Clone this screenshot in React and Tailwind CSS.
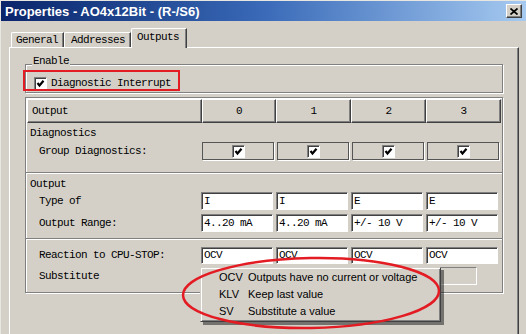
import React from "react";

const mono = "font-['Liberation_Mono',monospace] text-[11px] tracking-[-0.6px] text-black";
const sans = "font-['Liberation_Sans',Arial,sans-serif]";

// sunken white checkbox with a tick
function Check() {
  return (
    <span className="block w-[13px] h-[13px] bg-white border border-t-[#808080] border-l-[#808080] border-b-white border-r-white shadow-[inset_1px_1px_0_#404040]">
      <svg width="11" height="11" viewBox="0 0 11 11" className="block">
        <polyline points="2.5,5 4.5,7.5 8.5,2.8" fill="none" stroke="#000" strokeWidth="2.2" />
      </svg>
    </span>
  );
}

function Field({ value }) {
  return (
    <div className={`w-[72px] h-full bg-white border border-t-[#808080] border-l-[#808080] border-b-white border-r-white shadow-[inset_1px_1px_0_#404040] pl-[2px] flex items-center leading-none ${mono}`}>
      {value}
    </div>
  );
}

function Row({ label, indent = true, className = "", children }) {
  return (
    <div className={`flex ${className}`}>
      <div className={`w-[175px] flex items-center ${indent ? "pl-[13px]" : "pl-[4px]"} ${mono}`}>{label}</div>
      {children}
    </div>
  );
}

function Separator({ className = "" }) {
  return <div className={`h-[2px] border-t border-[#808080] bg-white ${className}`} />;
}

const columns = ["0", "1", "2", "3"];

export default function App() {
  return (
    <div className="w-[526px] h-[334px] overflow-hidden relative bg-[#d4d0c8] border-t border-l border-t-[#e8e6e0] border-l-[#e8e6e0]">
      {/* title bar */}
      <div className="h-[20px] bg-gradient-to-r from-[#0a246a] via-[#3a6ab8] to-[#a6caf0] flex items-center justify-between pl-[4px] pr-[4px]">
        <span className={`${sans} text-white font-bold text-[13px] leading-none`}>Properties - AO4x12Bit - (R-/S6)</span>
        <span className="w-[16px] h-[14px] bg-[#d4d0c8] border border-t-white border-l-white border-b-[#404040] border-r-[#404040] shadow-[inset_-1px_-1px_0_#808080] flex items-center justify-center">
          <svg width="8" height="7" viewBox="0 0 8 7" className="block">
            <path d="M0.5 0.5 L7.5 6.5 M7.5 0.5 L0.5 6.5" stroke="#000" strokeWidth="1.7" />
          </svg>
        </span>
      </div>

      {/* tabs */}
      <div className="ml-[8px] h-[26px] flex items-end relative z-10">
        <div className={`ml-[2px] w-[53px] h-[15px] border-t border-l border-t-white border-l-white border-r border-r-[#404040] shadow-[inset_-1px_0_0_#808080] rounded-tl-[2px] pl-[4px] flex items-center ${mono}`}>General</div>
        <div className={`w-[67px] h-[15px] border-t border-l border-t-white border-l-white border-r border-r-[#404040] shadow-[inset_-1px_0_0_#808080] rounded-tl-[2px] pl-[6px] flex items-center ${mono}`}>Addresses</div>
        <div className={`w-[56px] h-[20px] -mb-[1px] bg-[#d4d0c8] border-t border-l border-t-white border-l-white border-r border-r-[#404040] shadow-[inset_-1px_0_0_#808080] rounded-tl-[2px] pl-[5px] pb-[2px] flex items-center ${mono}`}>Outputs</div>
      </div>

      {/* tab panel */}
      <div className="ml-[8px] w-[510px] h-[300px] border-t border-l border-white border-r border-r-[#404040] shadow-[inset_-1px_0_0_#808080] pl-[15px]">
        {/* Enable group */}
        <div className="mt-[16px] w-[478px] h-[29px] relative border border-[#808080] shadow-[inset_1px_1px_0_#fff,1px_1px_0_#fff] pt-[10px] pl-[8px]">
          <span className={`absolute left-[6px] -top-[10px] px-[1px] h-[13px] leading-[13px] bg-[#d4d0c8] ${mono}`}>Enable</span>
          <div className="flex items-center gap-[4px]">
            <Check />
            <span className={mono}>Diagnostic Interrupt</span>
          </div>
          <div className="absolute -left-[3px] top-[5px] w-[157px] h-[21px] border-2 border-[#e31b23]" />
        </div>

        {/* table group */}
        <div className="mt-[4px] w-[478px] border border-[#808080] shadow-[inset_1px_1px_0_#fff,1px_1px_0_#fff] pt-[1px] pb-[7px]">
          {/* header */}
          <div className="flex h-[24px] pl-[1px]">
            <div className={`w-[175px] border border-t-white border-l-white border-b-[#404040] border-r-[#404040] shadow-[inset_-1px_-1px_0_#808080] pl-[4px] flex items-center ${mono}`}>Output</div>
            {columns.map((c, i) => (
              <div key={c} className={`${i === 0 ? "w-[74px]" : "w-[75px]"} border border-t-white border-l-white border-b-[#404040] border-r-[#404040] shadow-[inset_-1px_-1px_0_#808080] flex items-center justify-center ${mono}`}>{c}</div>
            ))}
          </div>

          <Row label="Diagnostics" indent={false} className="mt-[1px] h-[18px]" />
          <Row label="Group Diagnostics:" className="h-[18px]">
            {columns.map((c) => (
              <div key={c} className="w-[75px] pl-[1px]">
                <div className="w-[72px] h-full border border-[#555] shadow-[1px_1px_0_#fff] flex items-center justify-center">
                  <Check />
                </div>
              </div>
            ))}
          </Row>

          <Separator className="mt-[12px]" />

          <Row label="Output" indent={false} className="mt-[2px] h-[16px]" />
          <Row label="Type of" className="h-[18px]">
            {["I", "I", "E", "E"].map((v, i) => (
              <div key={i} className="w-[75px]"><Field value={v} /></div>
            ))}
          </Row>
          <Row label="Output Range:" className="mt-[4px] h-[18px]">
            {["4..20 mA", "4..20 mA", "+/- 10 V", "+/- 10 V"].map((v, i) => (
              <div key={i} className="w-[75px]"><Field value={v} /></div>
            ))}
          </Row>

          <Separator className="mt-[6px]" />

          <Row label="Reaction to CPU-STOP:" className="mt-[7px] h-[17px]">
            {["OCV", "OCV", "OCV", "OCV"].map((v, i) => (
              <div key={i} className="w-[75px]"><Field value={v} /></div>
            ))}
          </Row>
          <Row label="Substitute" className="mt-[3px] h-[18px]">
            <div className="w-[225px]" />
            <div className="w-[51px] h-full border border-t-[#808080] border-l-[#808080] border-b-white border-r-white" />
          </Row>
        </div>
      </div>

      {/* dropdown list */}
      <div className={`absolute left-[199px] top-[266px] w-[241px] h-[55px] bg-[#d4d0c8] border border-t-[#d4d0c8] border-l-[#d4d0c8] border-b-[#404040] border-r-[#404040] shadow-[inset_1px_1px_0_#fff,inset_-1px_-1px_0_#808080,3px_3px_0_rgba(0,0,0,0.45)] pt-[1px] ${sans} text-[11px] text-black`}>
        {[
          ["OCV", "Outputs have no current or voltage"],
          ["KLV", "Keep last value"],
          ["SV", "Substitute a value"],
        ].map(([k, d]) => (
          <div key={k} className="h-[17px] flex items-center pl-[18px]">
            <span className="w-[29px]">{k}</span>
            <span>{d}</span>
          </div>
        ))}
      </div>

      {/* red annotation ellipse */}
      <svg className="absolute left-[179px] top-[253px]" width="264" height="78" viewBox="0 0 264 78">
        <ellipse cx="131" cy="39" rx="128" ry="35" fill="none" stroke="#e31b23" strokeWidth="2.5" transform="rotate(-1 131 39)" />
      </svg>
    </div>
  );
}
